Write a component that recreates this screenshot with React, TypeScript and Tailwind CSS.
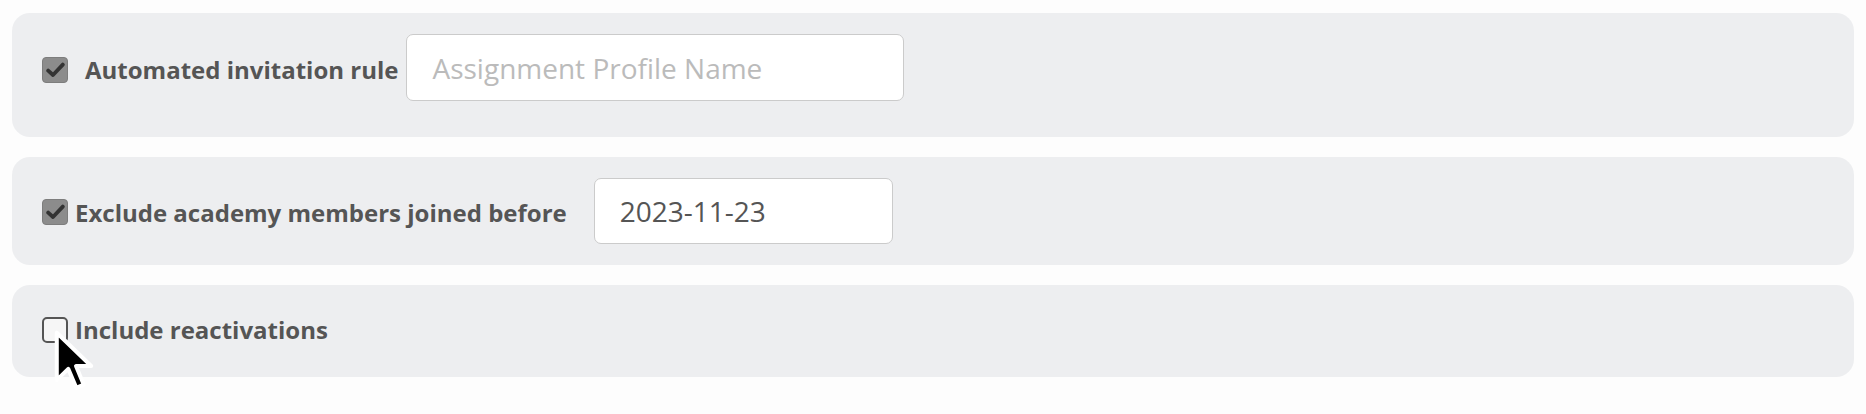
import React from "react";

const labelStyles = "text-[24px] font-bold text-[#555] leading-none whitespace-nowrap";
const inputStyles =
  "h-[67px] rounded-[7px] border border-[#cbcbcb] bg-white px-[25px] text-[28px] text-[#555] placeholder:text-[#bbb] outline-none";

const CheckedBox = () => (
  <div className="flex h-[26px] w-[26px] shrink-0 items-center justify-center rounded-[4px] border border-[#7d7d7d] bg-[#8c8c8c]">
    <svg width="19" height="16" viewBox="0 0 19 16">
      <path d="M2.2 8.6 L7 13 L16.8 2.6" fill="none" stroke="#333" strokeWidth="3.8" strokeLinecap="round" strokeLinejoin="round" />
    </svg>
  </div>
);

const EmptyBox = () => (
  <div className="h-[26px] w-[26px] shrink-0 rounded-[5px] border-2 border-[#555] bg-[#f6f6f6]" />
);

const Cursor = () => (
  <svg className="absolute left-[41px] top-[44px]" width="42" height="62" viewBox="-1.3 -1.3 14.6 21.6">
    <path
      d="M0 0 L0 16.5 L4 12.6 L6.8 19.2 L9.4 18.1 L6.7 11.6 L12 11.6 Z"
      fill="#000"
      stroke="#fff"
      strokeWidth="1.4"
      strokeLinejoin="round"
    />
  </svg>
);

const App = () => {
  return (
    <div className="min-h-screen bg-[#fdfdfd] px-3 pt-[13px] font-['Open_Sans',sans-serif]">
      <div className="flex flex-col gap-5">
        {/* AUTOMATED RULE */}
        <div className="flex items-center rounded-[18px] bg-[#edeef0] pl-[30px] pt-[21px] pb-[36px]">
          <div className="mt-[4px]">
            <CheckedBox />
          </div>
          <span className={`ml-[17px] mt-[4px] ${labelStyles}`}>Automated invitation rule</span>
          <input className={`ml-2 w-[498px] ${inputStyles}`} type="text" placeholder="Assignment Profile Name" />
        </div>

        {/* EXCLUDE MEMBERS */}
        <div className="flex h-[108px] items-center rounded-[18px] bg-[#edeef0] pl-[30px]">
          <div className="mt-[2px]">
            <CheckedBox />
          </div>
          <span className={`ml-[7px] mt-[4px] ${labelStyles}`}>Exclude academy members joined before</span>
          <input className={`ml-[27px] mt-[-1px] w-[299px] !h-[66px] ${inputStyles}`} type="text" defaultValue="2023-11-23" />
        </div>

        {/* REACTIVATIONS */}
        <div className="relative flex h-[92px] items-center rounded-[18px] bg-[#edeef0] pl-[30px]">
          <div className="mt-[-2px]">
            <EmptyBox />
          </div>
          <span className={`ml-[7px] mt-[-2px] ${labelStyles}`}>Include reactivations</span>
          <Cursor />
        </div>
      </div>
    </div>
  );
};

export default App;
